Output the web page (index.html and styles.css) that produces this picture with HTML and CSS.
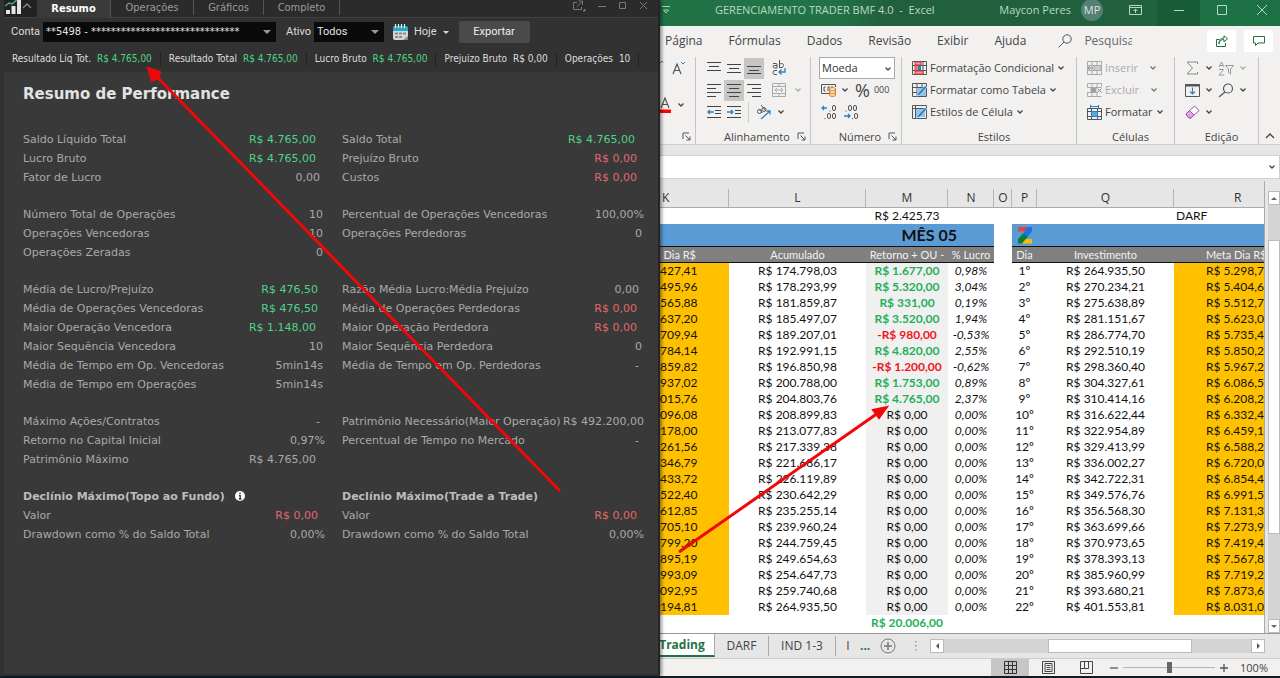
FILE: index.html
```html
<!DOCTYPE html>
<html lang="pt-BR">
<head>
<meta charset="utf-8">
<title>Resumo de Performance</title>
<link rel="stylesheet" href="styles.css">
</head>
<body>
<svg class="defs" width="0" height="0" aria-hidden="true">
  <symbol id="chev" viewBox="0 0 8 8"><path d="M1.500 2.500 4 5l2.500-2.500" fill="none" stroke="currentColor" stroke-width="1.300"/></symbol>
  <symbol id="launch" viewBox="0 0 9 9"><path d="M1 7V1h6M3.500 3.500 8 8M8 4.500V8H4.500" fill="none" stroke="#555"/></symbol>
</svg>
<main class="desk">
  <section class="trader">
    <nav class="tabs">
      <button class="logo" aria-label="Menu"><svg width="30" height="17" viewBox="0 0 30 17"><path d="M2 10h4v4H2zM7.500 6h4v8h-4zM13 0h4v14h-4z" fill="#e4e4e4"/><path d="M1 6l4-3 3 1 6-5" fill="none" stroke="#3fae86" stroke-width="1.500"/><path d="M19 8l4-4 4 4" fill="none" stroke="#888" stroke-width="1.300"/></svg></button>
      <button class="tab on">Resumo</button>
      <button class="tab">Operações</button>
      <button class="tab t2">Gráficos</button>
      <button class="tab t3">Completo</button>
      <span class="wins">
        <button aria-label="Destacar"><svg width="14" height="12" viewBox="0 0 14 12" fill="none" stroke="#777"><path d="M5 2.500H1.500v7h8V7M5 6.500l5-5M6.500 1h4v4"/><path d="M11 11h2V9z" fill="#777"/></svg></button>
        <button aria-label="Minimizar"><svg width="10" height="12" viewBox="0 0 10 12"><path d="M1 6.500h8" stroke="#777"/></svg></button>
        <button aria-label="Maximizar"><svg width="10" height="12" viewBox="0 0 10 12"><path d="M1.500 2.500h6v6h-6z" fill="none" stroke="#777"/></svg></button>
        <button aria-label="Fechar"><svg width="10" height="12" viewBox="0 0 10 12"><path d="M1 2l7 7M8 2L1 9" stroke="#777"/></svg></button>
      </span>
    </nav>
    <div class="filters">
      <label for="conta">Conta</label>
      <span class="pick conta"><select id="conta"><option>**5498 - ******************************</option></select></span>
      <label for="ativo">Ativo</label>
      <span class="pick ativo"><select id="ativo"><option>Todos</option></select></span>
      <button class="today"><svg width="18" height="17" viewBox="0 0 18 17"><rect x="1" y="3" width="15" height="13" rx="2" fill="#d6d6d6"/><path d="M1 7V4q0-2 2-2h11q2 0 2 2v3z" fill="#27a9c9"/><path d="M3.500 0v4M6.500 0v4M9.500 0v4M12.500 0v4" stroke="#e8f6fa" stroke-width="1.200"/><path d="M3 8.500h3v2H3zM7 8.500h3v2H7zM11 8.500h3v2h-3zM3 12h3v2H3zM7 12h3v2H7z" fill="#8b8b8b"/><path d="M11 16l5-4v2q0 2-2 2z" fill="#888"/></svg>Hoje<i class="tri"></i></button>
      <button class="export">Exportar</button>
    </div>
    <div class="totals">
      <span>Resultado Liq Tot. <b class="g">R$ 4.765,00</b></span>
      <span>Resultado Total <b class="g">R$ 4.765,00</b></span>
      <span>Lucro Bruto <b class="g">R$ 4.765,00</b></span>
      <span>Prejuizo Bruto <b>R$ 0,00</b></span>
      <span>Operações <b>10</b></span>
    </div>
    <div class="report">
      <h1>Resumo de Performance</h1>
      <table class="perf">
        <colgroup><col class="c1"><col class="c2"><col class="c3"><col class="c4"></colgroup>
        <tbody>
        <tr><th>Saldo Líquido Total</th><td class="g m">R$ 4.765,00</td><th>Saldo Total</th><td class="g m">R$ 4.765,00</td></tr>
        <tr><th>Lucro Bruto</th><td class="g m">R$ 4.765,00</td><th>Prejuízo Bruto</th><td class="r n">R$ 0,00</td></tr>
        <tr><th>Fator de Lucro</th><td class="d">0,00</td><th>Custos</th><td class="r n">R$ 0,00</td></tr>
        </tbody><tbody>
        <tr><th>Número Total de Operações</th><td>10</td><th>Percentual de Operações Vencedoras</th><td class="z">100,00%</td></tr>
        <tr><th>Operações Vencedoras</th><td>10</td><th>Operações Perdedoras</th><td>0</td></tr>
        <tr><th>Operações Zeradas</th><td>0</td><th></th><td></td></tr>
        </tbody><tbody>
        <tr><th>Média de Lucro/Prejuízo</th><td class="g n">R$ 476,50</td><th>Razão Média Lucro:Média Prejuízo</th><td class="d">0,00</td></tr>
        <tr><th>Média de Operações Vencedoras</th><td class="g n">R$ 476,50</td><th>Média de Operações Perdedoras</th><td class="r n">R$ 0,00</td></tr>
        <tr><th>Maior Operação Vencedora</th><td class="g m">R$ 1.148,00</td><th>Maior Operação Perdedora</th><td class="r n">R$ 0,00</td></tr>
        <tr><th>Maior Sequência Vencedora</th><td>10</td><th>Maior Sequência Perdedora</th><td>0</td></tr>
        <tr><th>Média de Tempo em Op. Vencedoras</th><td>5min14s</td><th>Média de Tempo em Op. Perdedoras</th><td class="d">-</td></tr>
        <tr><th>Média de Tempo em Operações</th><td>5min14s</td><th></th><td></td></tr>
        </tbody><tbody>
        <tr><th>Máximo Ações/Contratos</th><td class="d">-</td><th>Patrimônio Necessário(Maior Operação)</th><td class="z">R$ 492.200,00</td></tr>
        <tr><th>Retorno no Capital Inicial</th><td class="z">0,97%</td><th>Percentual de Tempo no Mercado</th><td class="d">-</td></tr>
        <tr><th>Patrimônio Máximo</th><td class="m">R$ 4.765,00</td><th></th><td></td></tr>
        </tbody><tbody>
        <tr class="sub"><th colspan="2">Declínio Máximo(Topo ao Fundo) <svg class="info" width="10" height="10" viewBox="0 0 10 10"><circle cx="5" cy="5" r="5" fill="#fff"/><path d="M5 1.500v1.500M4 4.500h1.200V8M3.800 8h2.600" fill="none" stroke="#333" stroke-width="1.300"/></svg></th><th colspan="2">Declínio Máximo(Trade a Trade)</th></tr>
        <tr><th>Valor</th><td class="r n">R$ 0,00</td><th>Valor</th><td class="r n">R$ 0,00</td></tr>
        <tr><th>Drawdown como % do Saldo Total</th><td class="z">0,00%</td><th>Drawdown como % do Saldo Total</th><td class="z">0,00%</td></tr>
        </tbody>
      </table>
    </div>
  </section>

  <section class="excel">
    <header class="title">
      <svg class="qat" width="10" height="10" viewBox="0 0 10 10"><path d="M1 1.500h8M2.500 5l2.500 3 2.500-3z" fill="none" stroke="#a9d0b8"/></svg>
      <span class="doc">GERENCIAMENTO TRADER BMF 4.0&nbsp; -&nbsp; Excel</span>
      <span class="user">Maycon Peres</span><span class="avatar">MP</span>
      <button aria-label="Opções da Faixa de Opções"><svg width="13" height="10" viewBox="0 0 13 10" fill="none" stroke="#b7d6c3"><path d="M.5.5h12v9H.5zM.5 2.500h12M6.500 8V4M4.500 6l2-2 2 2"/></svg></button>
      <button class="min" aria-label="Minimizar"><svg width="10" height="10" viewBox="0 0 10 10"><path d="M0 5.500h10" stroke="#b7d6c3"/></svg></button>
      <button aria-label="Maximizar"><svg width="10" height="10" viewBox="0 0 10 10"><path d="M.5.5h9v9h-9z" fill="none" stroke="#b7d6c3"/></svg></button>
      <button class="close" aria-label="Fechar"><svg width="10" height="10" viewBox="0 0 10 10"><path d="M0 0l10 10M10 0L0 10" stroke="#b7d6c3"/></svg></button>
    </header>
    <nav class="menu">
      <a href="#">Página</a><a href="#">Fórmulas</a><a href="#">Dados</a><a href="#">Revisão</a><a href="#">Exibir</a><a href="#">Ajuda</a>
      <label class="find"><svg width="14" height="14" viewBox="0 0 14 14" fill="none" stroke="#555"><circle cx="9" cy="5" r="4.200"/><path d="M6 8l-5.500 5.500"/></svg><input type="text" value="Pesquisa" aria-label="Pesquisar"></label>
      <button class="box" aria-label="Compartilhar"><svg width="12" height="12" viewBox="0 0 12 12" fill="none" stroke="#217346"><path d="M3.500 4.500h-3v7h9V8M3 9c0-3 2-4.500 5-4.500V7l3.500-3.300L8 .8v2.200C5 3 3 5 3 9z"/></svg></button>
      <button class="box" aria-label="Comentários"><svg width="12" height="12" viewBox="0 0 12 12" fill="none" stroke="#217346"><path d="M.5 1.500h11v6.500H5L2.500 10.500V8h-2z"/></svg></button>
    </nav>
    <div class="ribbon">
      <div class="grp fontg">
        <div class="row"><svg width="25" height="18" viewBox="0 0 25 18" fill="none"><path d="M0 4l2-2 1 1.500" stroke="#2b83c4"/><path d="M13 15l4-10 4 10M14.500 11.500h5" stroke="#555" stroke-width="1.200"/><path d="M21 3l2 2 2-2" stroke="#2b83c4"/></svg></div>
        <div class="row low"><svg width="13" height="17" viewBox="0 0 13 17"><path d="M1 11L5 1l4 10M2.500 7.500h5" fill="none" stroke="#555" stroke-width="1.200"/><path d="M0 12.500h11v3.500H0z" fill="#f00"/></svg><svg class="chev"><use href="#chev"/></svg></div>
        <footer><svg class="launch"><use href="#launch"/></svg></footer>
      </div>
      <div class="grp align">
        <div class="row">
          <button aria-label="Alinhar acima"><svg width="14" height="14" viewBox="0 0 14 14" stroke="#444"><path d="M0 1.500h14M2 5.500h10M0 9.500h14"/></svg></button>
          <button aria-label="Alinhar no meio"><svg width="14" height="14" viewBox="0 0 14 14" stroke="#444"><path d="M0 3.500h14M2 7.500h10M0 11.500h14"/></svg></button>
          <button class="down" aria-label="Alinhar abaixo"><svg width="14" height="14" viewBox="0 0 14 14" stroke="#444"><path d="M0 5.500h14M2 9.500h10M0 12.500h14"/></svg></button>
          <button class="wide" aria-label="Quebrar texto"><svg width="14" height="16" viewBox="0 0 14 16" fill="none" stroke="#555"><path d="M1 3.500h3q1 0 1 1V8H2.500Q1 8 1 6.500T2.500 5.500H5M7.500 0v8M7.500 4q4-1.500 4 1.500T7.500 7.500M5 10.500H3q-2 0-2 2t2 2h2"/><path d="M13 8v4H7M9.500 9.500L7 12l2.500 2.500" stroke="#2b83c4" stroke-width="1.300"/></svg></button>
        </div>
        <div class="row">
          <button aria-label="Alinhar à esquerda"><svg width="14" height="14" viewBox="0 0 14 14" stroke="#444"><path d="M0 1.500h14M0 5.500h9M0 9.500h14M0 13.500h9"/></svg></button>
          <button class="down" aria-label="Centralizar"><svg width="14" height="14" viewBox="0 0 14 14" stroke="#444"><path d="M0 1.500h14M2 5.500h10M0 9.500h14M2 13.500h10"/></svg></button>
          <button aria-label="Alinhar à direita"><svg width="14" height="14" viewBox="0 0 14 14" stroke="#444"><path d="M0 1.500h14M5 5.500h9M0 9.500h14M5 13.500h9"/></svg></button>
          <button class="merge" aria-label="Mesclar"><svg width="14" height="14" viewBox="0 0 14 14" fill="none" stroke="#aaa"><path d="M.5.5h13v13H.5zM.5 3.500h13M.5 10.500h13M7 .5v3M7 10.500v3M3 7h8M5 5L3 7l2 2M9 5l2 2-2 2"/></svg></button><svg class="chev dim"><use href="#chev"/></svg>
        </div>
        <div class="row">
          <button aria-label="Diminuir recuo"><svg width="14" height="14" viewBox="0 0 14 14" fill="none" stroke="#444"><path d="M0 1.500h14M8 5.500h6M8 8.500h6M0 12.500h14"/><path d="M7 7H1M3 5L1 7l2 2" stroke="#2b83c4" stroke-width="1.300"/></svg></button>
          <button aria-label="Aumentar recuo"><svg width="14" height="14" viewBox="0 0 14 14" fill="none" stroke="#444"><path d="M0 1.500h14M8 5.500h6M8 8.500h6M0 12.500h14"/><path d="M0 7h6M4 5l2 2-2 2" stroke="#2b83c4" stroke-width="1.300"/></svg></button>
          <button class="orient" aria-label="Orientação"><svg width="16" height="15" viewBox="0 0 16 15" fill="none" stroke="#555"><circle cx="3.500" cy="6.500" r="2"/><path d="M3 4l3.500 4M5 0l4.500 5.500"/><circle cx="8" cy="4.500" r="2"/><path d="M5 14l9-8M10.500 6H14v3.500" stroke="#2b83c4" stroke-width="1.300"/></svg></button><svg class="chev"><use href="#chev"/></svg>
        </div>
        <footer>Alinhamento<svg class="launch"><use href="#launch"/></svg></footer>
      </div>
      <div class="grp num">
        <span class="fmt"><select aria-label="Formato de número"><option>Moeda</option></select><svg class="chev"><use href="#chev"/></svg></span>
        <div class="row">
          <button aria-label="Formato de contabilização"><svg width="16" height="14" viewBox="0 0 16 14" fill="none" stroke="#555"><path d="M8 10.500H.5v-9h14V4M4.500 4H3v4h1.500M7 4v4M7 4h2M10 4h2"/><path d="M8.500 6v6c0 2 6 2 6 0V6c0 2-6 2-6 0s6-2 6 0M8.500 9c0 2 6 2 6 0" fill="#fbd9a8" stroke="#e07b1a"/></svg></button><svg class="chev"><use href="#chev"/></svg>
          <button class="pct">%</button><button class="mil">000</button>
        </div>
        <div class="row dec">
          <button aria-label="Aumentar casas decimais"><svg width="16" height="16" viewBox="0 0 16 16" fill="none" stroke="#555"><path d="M6 4H1M3 2L1 4l2 2" stroke="#2b83c4" stroke-width="1.300"/><rect x="11.500" y="1.500" width="3" height="5" rx="1.500"/><rect x="6.500" y="9.500" width="3" height="5" rx="1.500"/><rect x="11.500" y="9.500" width="3" height="5" rx="1.500"/><path d="M9 6.500v1M4 14v1"/></svg></button>
          <button aria-label="Diminuir casas decimais"><svg width="16" height="16" viewBox="0 0 16 16" fill="none" stroke="#555"><rect x="5.500" y="1.500" width="3" height="5" rx="1.500"/><rect x="10.500" y="1.500" width="3" height="5" rx="1.500"/><rect x="11.500" y="9.500" width="3" height="5" rx="1.500"/><path d="M3 6.500v1M9.500 14v1"/><path d="M1 12h6M5 10l2 2-2 2" stroke="#2b83c4" stroke-width="1.300"/></svg></button>
        </div>
        <footer>Número<svg class="launch"><use href="#launch"/></svg></footer>
      </div>
      <div class="grp styles">
        <button class="cmd"><svg width="15" height="14" viewBox="0 0 15 14" fill="none"><path d="M.5.500h14v13H.5zM.5 4.500h14M.5 9.500h14M4.500.5v13M11 .5v13" stroke="#555"/><path d="M3 1h6v3H3zM3 10h8v3H3zM3 4h2v6H3z" fill="#f1a1a5" stroke="#d13438"/><path d="M6 5h3v4H6z" fill="#2b83c4"/></svg>Formatação Condicional<svg class="chev"><use href="#chev"/></svg></button>
        <button class="cmd"><svg width="15" height="14" viewBox="0 0 15 14" fill="none"><path d="M.5.500h14v13H.5zM.5 4.500h14M.5 9.500h14M5 .5v13M10 .5v13" stroke="#555"/><path d="M5 5h9v8H5z" fill="#8dc3ec"/><path d="M4 13l4-1 7-8-2-1.500L6 10z" fill="#2b83c4" stroke="#f2f1f0" stroke-width=".6"/></svg>Formatar como Tabela<svg class="chev"><use href="#chev"/></svg></button>
        <button class="cmd"><svg width="15" height="14" viewBox="0 0 15 14" fill="none"><path d="M.5.500h14v13H.5z" stroke="#555"/><path d="M.5 3.500h14M3.500.5v13" stroke="#555"/><path d="M4 4h9v8H4z" fill="#8dc3ec"/><path d="M4 13l4-1 7-8-2-1.500L6 10z" fill="#2b83c4" stroke="#f2f1f0" stroke-width=".6"/></svg>Estilos de Célula<svg class="chev"><use href="#chev"/></svg></button>
        <footer>Estilos</footer>
      </div>
      <div class="grp cells">
        <button class="cmd off" disabled><svg width="15" height="14" viewBox="0 0 15 14" fill="none" stroke="#aaa"><path d="M.5.500h14v13H.5zM.5 4.500h14M.5 9.500h14M5 .5v13M10 .5v13"/><path d="M7 4.500h7v5H7z" fill="#ccc"/><path d="M6 7H1M3 5L1 7l2 2" stroke="#888"/></svg><span>Inserir</span><svg class="chev"><use href="#chev"/></svg></button>
        <button class="cmd off" disabled><svg width="15" height="14" viewBox="0 0 15 14" fill="none" stroke="#aaa"><path d="M.5.500h14M.5 4.500h14M.5 9.500h10M.5 13.500h14M5 .5v13M10 .5v4M10 9.500v4M.5.5v4M.5 9.500v4M14.500.5v3"/><path d="M4 5h5v4H4z" fill="#999"/><path d="M10.500 5.500l4 4M14.500 5.500l-4 4" stroke="#888"/></svg><span>Excluir</span><svg class="chev"><use href="#chev"/></svg></button>
        <button class="cmd"><svg width="15" height="15" viewBox="0 0 15 15" fill="none" stroke="#555"><path d="M.5 3.500h14v11H.5zM.5 6.500h14M.5 11.500h14M4.500 3.500v11M10.500 3.500v11"/><path d="M4.500 6.500h6v5h-6z" fill="#5aa5de" stroke="#2b83c4"/><path d="M3.500 0v3M11.500 0v3M3.500 1.500h8" stroke="#2b83c4"/></svg>Formatar<svg class="chev"><use href="#chev"/></svg></button>
        <footer>Células</footer>
      </div>
      <div class="grp edit">
        <div class="row"><button aria-label="Soma"><svg width="15" height="14" viewBox="0 0 15 14"><path d="M12.500 3V1H2l5.500 6L2 13h10.500v-2" fill="none" stroke="#888"/></svg></button><svg class="chev"><use href="#chev"/></svg><button aria-label="Classificar e filtrar"><svg width="16" height="15" viewBox="0 0 16 15" fill="none" stroke="#999"><path d="M1 6l2.500-5L6 6M2 4.500h3M1 8.500h4.500L1 14h5M7.500 4.500h8L12.500 8v5l-2-1.500V8z"/></svg></button><svg class="chev dim"><use href="#chev"/></svg></div>
        <div class="row"><button aria-label="Preencher"><svg width="15" height="14" viewBox="0 0 15 14" fill="none"><path d="M.5 1.500h14v12H.5z" stroke="#555"/><path d="M0 2.500h15" stroke="#555" stroke-width="2"/><path d="M7.500 4.500V11M5 8.500L7.500 11 10 8.500" stroke="#2b83c4" stroke-width="1.200"/></svg></button><svg class="chev"><use href="#chev"/></svg><button aria-label="Localizar"><svg width="16" height="15" viewBox="0 0 16 15" fill="none" stroke="#555" stroke-width="1.200"><circle cx="10" cy="5.500" r="4.500"/><path d="M7 9l-6 5"/></svg></button><svg class="chev"><use href="#chev"/></svg></div>
        <div class="row"><button aria-label="Limpar"><svg width="15" height="14" viewBox="0 0 15 14"><path d="M1 9L9.500 1 14 5.500 6 13H4z" fill="#fff" stroke="#a24bb5"/><path d="M1 9l3.500-3.500L9 10l-3 3H4z" fill="#dba6e6" stroke="#a24bb5"/></svg></button><svg class="chev"><use href="#chev"/></svg></div>
        <footer>Edição</footer>
      </div>
      <button class="fold" aria-label="Recolher"><svg width="10" height="8" viewBox="0 0 10 8"><path d="M1 6l4-4 4 4" fill="none" stroke="#444" stroke-width="1.300"/></svg></button>
    </div>
    <div class="formula"><input type="text" aria-label="Barra de fórmulas"><svg class="chev"><use href="#chev"/></svg></div>
    <div class="work">
      <div class="sheet">
      <table class="grid">
        <colgroup><col class="k"><col class="l"><col class="m"><col class="n"><col class="o"><col class="p"><col class="l"><col class="rr"></colgroup>
        <thead><tr><th class="ck">K</th><th>L</th><th>M</th><th>N</th><th>O</th><th>P</th><th>Q</th><th class="cr">R</th></tr></thead>
        <tbody>
        <tr class="top"><td></td><td></td><td class="free">R$ 2.425,73</td><td></td><td></td><td></td><td></td><td class="darf">DARF</td></tr>
        <tr class="month"><td class="blue mes" colspan="4">MÊS 05</td><td></td><td class="blue z" colspan="3"><svg width="16" height="18" viewBox="0 0 16 18"><path d="M1 1h10v4.500H1z" fill="#ea4335"/><path d="M5 13h10v4.500H4z" fill="#fbbc04"/><path d="M10.500 1H15v4.500L9.500 12 6 8z" fill="#1a73e8"/><path d="M6 7.500l4.500 3.500L5 17.500H1V13z" fill="#0b7d3b"/></svg></td></tr>
        <tr class="names"><td class="gy dk">Dia R$</td><td class="gy">Acumulado</td><td class="gy">Retorno + OU -</td><td class="gy">% Lucro</td><td></td><td class="gy">Dia</td><td class="gy">Investimento</td><td class="gy dr">Meta Dia R$</td></tr>
        <tr><td>427,41</td><td>R$ 174.798,03</td><td class="up">R$ 1.677,00</td><td>0,98%</td><td></td><td>1º</td><td>R$ 264.935,50</td><td>R$ 5.298,71</td></tr>
        <tr><td>495,96</td><td>R$ 178.293,99</td><td class="up">R$ 5.320,00</td><td>3,04%</td><td></td><td>2º</td><td>R$ 270.234,21</td><td>R$ 5.404,68</td></tr>
        <tr><td>565,88</td><td>R$ 181.859,87</td><td class="up">R$ 331,00</td><td>0,19%</td><td></td><td>3º</td><td>R$ 275.638,89</td><td>R$ 5.512,78</td></tr>
        <tr><td>637,20</td><td>R$ 185.497,07</td><td class="up">R$ 3.520,00</td><td>1,94%</td><td></td><td>4º</td><td>R$ 281.151,67</td><td>R$ 5.623,03</td></tr>
        <tr><td>709,94</td><td>R$ 189.207,01</td><td class="dn">-R$ 980,00</td><td>-0,53%</td><td></td><td>5º</td><td>R$ 286.774,70</td><td>R$ 5.735,49</td></tr>
        <tr><td>784,14</td><td>R$ 192.991,15</td><td class="up">R$ 4.820,00</td><td>2,55%</td><td></td><td>6º</td><td>R$ 292.510,19</td><td>R$ 5.850,20</td></tr>
        <tr><td>859,82</td><td>R$ 196.850,98</td><td class="dn">-R$ 1.200,00</td><td>-0,62%</td><td></td><td>7º</td><td>R$ 298.360,40</td><td>R$ 5.967,21</td></tr>
        <tr><td>937,02</td><td>R$ 200.788,00</td><td class="up">R$ 1.753,00</td><td>0,89%</td><td></td><td>8º</td><td>R$ 304.327,61</td><td>R$ 6.086,55</td></tr>
        <tr><td>015,76</td><td>R$ 204.803,76</td><td class="up">R$ 4.765,00</td><td>2,37%</td><td></td><td>9º</td><td>R$ 310.414,16</td><td>R$ 6.208,28</td></tr>
        <tr><td>096,08</td><td>R$ 208.899,83</td><td>R$ 0,00</td><td>0,00%</td><td></td><td>10º</td><td>R$ 316.622,44</td><td>R$ 6.332,45</td></tr>
        <tr><td>178,00</td><td>R$ 213.077,83</td><td>R$ 0,00</td><td>0,00%</td><td></td><td>11º</td><td>R$ 322.954,89</td><td>R$ 6.459,10</td></tr>
        <tr><td>261,56</td><td>R$ 217.339,38</td><td>R$ 0,00</td><td>0,00%</td><td></td><td>12º</td><td>R$ 329.413,99</td><td>R$ 6.588,28</td></tr>
        <tr><td>346,79</td><td>R$ 221.686,17</td><td>R$ 0,00</td><td>0,00%</td><td></td><td>13º</td><td>R$ 336.002,27</td><td>R$ 6.720,05</td></tr>
        <tr><td>433,72</td><td>R$ 226.119,89</td><td>R$ 0,00</td><td>0,00%</td><td></td><td>14º</td><td>R$ 342.722,31</td><td>R$ 6.854,45</td></tr>
        <tr><td>522,40</td><td>R$ 230.642,29</td><td>R$ 0,00</td><td>0,00%</td><td></td><td>15º</td><td>R$ 349.576,76</td><td>R$ 6.991,54</td></tr>
        <tr><td>612,85</td><td>R$ 235.255,14</td><td>R$ 0,00</td><td>0,00%</td><td></td><td>16º</td><td>R$ 356.568,30</td><td>R$ 7.131,37</td></tr>
        <tr><td>705,10</td><td>R$ 239.960,24</td><td>R$ 0,00</td><td>0,00%</td><td></td><td>17º</td><td>R$ 363.699,66</td><td>R$ 7.273,99</td></tr>
        <tr><td>799,20</td><td>R$ 244.759,45</td><td>R$ 0,00</td><td>0,00%</td><td></td><td>18º</td><td>R$ 370.973,65</td><td>R$ 7.419,47</td></tr>
        <tr><td>895,19</td><td>R$ 249.654,63</td><td>R$ 0,00</td><td>0,00%</td><td></td><td>19º</td><td>R$ 378.393,13</td><td>R$ 7.567,86</td></tr>
        <tr><td>993,09</td><td>R$ 254.647,73</td><td>R$ 0,00</td><td>0,00%</td><td></td><td>20º</td><td>R$ 385.960,99</td><td>R$ 7.719,22</td></tr>
        <tr><td>092,95</td><td>R$ 259.740,68</td><td>R$ 0,00</td><td>0,00%</td><td></td><td>21º</td><td>R$ 393.680,21</td><td>R$ 7.873,60</td></tr>
        <tr><td>194,81</td><td>R$ 264.935,50</td><td>R$ 0,00</td><td>0,00%</td><td></td><td>22º</td><td>R$ 401.553,81</td><td>R$ 8.031,08</td></tr>
        <tr class="sum"><td></td><td></td><td class="up">R$ 20.006,00</td><td></td><td></td><td></td><td></td><td></td></tr>
        </tbody>
      </table>
      </div>
      <div class="vbar"><button aria-label="Subir"><i class="tri up3"></i></button><div class="vtrack"><div class="vthumb"></div></div><button aria-label="Descer"><i class="tri"></i></button></div>
    </div>
    <div class="sheets">
      <button class="st on">Trading</button><button class="st">DARF</button><button class="st w2">IND 1-3</button><button class="st w3">I</button><b class="more">...</b>
      <button class="add" aria-label="Nova planilha"><svg width="16" height="16" viewBox="0 0 16 16" fill="none" stroke="#777"><circle cx="8" cy="8" r="7"/><path d="M8 4v8M4 8h8" stroke-width="1.500"/></svg></button>
      <svg class="dots" width="3" height="12" viewBox="0 0 3 12"><path d="M1 1h1.500v1.500H1zM1 5h1.500v1.500H1zM1 9h1.500v1.500H1z" fill="#999"/></svg>
      <div class="hbar"><button aria-label="Esquerda"><i class="tri lf"></i></button><div class="htrack"><div class="hthumb"></div></div><button aria-label="Direita"><i class="tri rt"></i></button></div>
    </div>
    <footer class="status">
      <button class="on" aria-label="Normal"><svg width="13" height="13" viewBox="0 0 13 13" fill="none" stroke="#333"><path d="M.5.500h12v12H.5zM.5 4.500h12M.5 8.500h12M4.500.5v12M8.500.5v12"/></svg></button>
      <button aria-label="Layout da Página"><svg width="13" height="13" viewBox="0 0 13 13" fill="none" stroke="#444"><path d="M.5.500h12v12H.5zM3 2.500h7v8H3zM4.500 4.500h4M4.500 6.500h4M4.500 8.500h4"/></svg></button>
      <button aria-label="Quebra de Página"><svg width="13" height="13" viewBox="0 0 13 13" fill="none" stroke="#444"><path d="M.5.500h12v12H.5zM.5 7.500h8v-7M4.500.5v7"/></svg></button>
      <button class="sm" aria-label="Menos zoom"><svg width="8" height="8" viewBox="0 0 8 8"><path d="M0 4h8" stroke="#555" stroke-width="1.300"/></svg></button>
      <input type="range" aria-label="Zoom" min="0" max="100" value="51">
      <button class="sm" aria-label="Mais zoom"><svg width="8" height="8" viewBox="0 0 8 8"><path d="M0 4h8M4 0v8" stroke="#555" stroke-width="1.300"/></svg></button>
      <span>100%</span>
    </footer>
  </section>
  <svg class="arrows" viewBox="0 0 1280 678" preserveAspectRatio="none" aria-hidden="true"><g stroke="#f00808" stroke-width="3"><path d="M560 491 156 76M679 552 878 413"/></g><path d="M148 68l12 4-1 6-7 3zM887 407l-8 11-6-8z" fill="#f00808" stroke="#f00808" stroke-width="2"/></svg>
</main>
</body>
</html>
```
FILE: styles.css
```css
* { box-sizing: border-box; }
body { margin: 0; background: #0c1c28; }
button { border: 0; background: none; padding: 0; margin: 0; font: inherit; color: inherit; display: flex; align-items: center; justify-content: center; white-space: nowrap; }
svg { display: block; flex: none; }
.defs { position: absolute; }
.desk { position: relative; min-height: 100vh; display: grid; grid-template-columns: 660fr 620fr; padding-bottom: 2px; }
.arrows { position: absolute; inset: 0; z-index: 2; width: 100%; height: 100%; pointer-events: none; }

/* Trading platform window */
.trader { min-width: 0; background: #393939; border-left: 4px solid #323232; border-right: 2px solid #252525; border-bottom: 2px solid #303030; color: #ddd; font: 11px/14px Roboto, sans-serif; box-shadow: 2px 0 3px #0006; z-index: 1; }
.tabs { display: flex; height: 18px; background: #2b2b2b; border-bottom: 1px solid #414141; font: 11px/14px "DejaVu Sans Condensed", "DejaVu Sans", sans-serif; color: #9a9a9a; }
.logo { width: 33px; justify-content: flex-start; background: #222; }
.tab { width: 83px; border-right: 1px solid #555; height: 15px; }
.tab.on { width: 74px; height: 18px; background: #3a3a3a; color: #fff; font-weight: bold; }
.tab.t2 { width: 70px; }
.tab.t3 { width: 76px; }
.wins { display: flex; margin-left: auto; gap: 11px; padding-right: 9px; height: 12px; }
.filters { display: flex; align-items: center; height: 28px; padding-left: 7px; background: #323232; }
.pick { position: relative; margin: 0 10px 0 3px; height: 20px; background: #0a0a0a; }
.pick.conta { width: 233px; }
.pick.ativo { width: 70px; margin: 0 8px 0 3px; }
.pick select { appearance: none; width: 100%; height: 20px; border: 0; padding: 0 14px 0 3px; background: none; color: #e4e4e4; font: inherit; }
.pick.conta select { font-family: "DejaVu Sans Condensed", "DejaVu Sans", sans-serif; }
.pick::after, .tri { content: ""; display: block; width: 0; border: 4px solid transparent; border-top-color: #999; border-bottom: 0; }
.pick::after { position: absolute; right: 5px; top: 8px; }
.today { gap: 4px; }
.tri { border-width: 3px; border-bottom: 0; border-top-color: #ddd; margin-left: 2px; }
.export { width: 71px; height: 22px; margin-left: 10px; background: #4a4a4a; border-radius: 2px; color: #eee; }
.totals { display: flex; height: 26px; align-items: center; background: #323232; font: 10px/14px "DejaVu Sans Condensed", "DejaVu Sans", sans-serif; }
.totals span { padding: 0 8px; border-right: 1px solid #222; white-space: nowrap; }
.totals b { font-weight: normal; margin-left: 3px; }
.g { color: #4fd486; }
.r { color: #e0686c; }
.report { padding: 12px 14px 0 19px; font: 11px/19px "DejaVu Sans", sans-serif; color: #a9a9a9; }
h1 { margin: 0 0 26px; font: bold 15px/20px "DejaVu Sans", sans-serif; color: #e2e2e2; }
.perf { width: 100%; border-collapse: collapse; table-layout: fixed; }
.perf .c1 { width: 212px; }
.perf .c2 { width: 107px; }
.perf .c3 { width: 212px; }
.perf .c4 { width: 90px; }
.perf th { padding: 0; font-weight: normal; text-align: left; white-space: nowrap; height: 19px; }
.perf td { padding: 0 19px 0 0; text-align: right; white-space: nowrap; }
.perf td:last-child { padding-right: 2px; }
.perf td.m { padding-right: 26px; }
.perf td.m:last-child { padding-right: 9px; }
.perf td.n { padding-right: 24px; }
.perf td.n:last-child { padding-right: 7px; }
.perf td.d { padding-right: 22px; }
.perf td.d:last-child { padding-right: 5px; }
.perf td.z { padding-right: 17px; }
.perf td.z:last-child { padding-right: 0; }
.perf td.g { color: #4fd486; }
.perf tbody + tbody::before { content: ""; display: block; height: 18px; }
.perf .sub th { font-weight: bold; color: #bdbdbd; }
.info { display: inline-block; margin-left: 6px; vertical-align: -1px; }

/* Spreadsheet window */
.excel { min-width: 0; display: flex; flex-direction: column; background: #e6e6e6; color: #444; font: 11px/16px "Open Sans", sans-serif; }
.title { display: flex; align-items: center; height: 26px; padding-bottom: 6px; background: linear-gradient(90deg, #217346 28%, #21603d 36%, #21603d 78%, #1e7145 88%); color: #b9d8c5; }
.title .qat { margin-left: 1px; }
.doc { margin-left: 44px; white-space: nowrap; }
.user { margin-left: auto; white-space: nowrap; }
.avatar { width: 22px; height: 22px; margin: 0 11px 0 10px; border-radius: 50%; background: #557f73; text-align: center; line-height: 22px; color: #d6e6de; }
.title button { width: 43px; height: 26px; margin-bottom: -6px; padding-bottom: 6px; }
.title .min { background: #185c37; }
.title .close { width: 37px; }
.menu { display: flex; align-items: center; height: 30px; gap: 26px; padding: 0 7px 0 5px; background: #f2f1f0; font-size: 12px; }
.menu a { color: #444; text-decoration: none; }
.find { display: flex; gap: 12px; align-items: center; margin-left: 6px; }
.find input { width: 48px; border: 0; padding: 0; background: none; font: inherit; color: #666; }
.box { width: 29px; height: 22px; background: #fff; border-radius: 2px; margin-left: auto; }
.box + .box { margin-left: -18px; }
.ribbon { display: flex; height: 89px; padding-top: 1px; background: #f2f1f0; border-bottom: 1px solid #cfcfcf; }
.grp { position: relative; display: flex; flex-direction: column; min-width: 0; height: 87px; border-right: 1px solid #c4c4c4; }
.grp footer { margin-top: auto; height: 15px; line-height: 15px; text-align: center; }
.fontg { flex: 36 1 36px; }
.align { flex: 115 1 115px; padding-left: 8px; }
.num { flex: 91 1 91px; padding-left: 8px; }
.styles { flex: 175 1 175px; padding-left: 10px; }
.cells { flex: 98 1 98px; padding-left: 10px; }
.edit { flex: 84 1 84px; padding-left: 10px; }
.fold { flex: 21 1 21px; align-items: flex-end; padding: 0 0 4px; }
.row { display: flex; align-items: center; height: 22px; }
.row.low { margin-top: 15px; }
.chev { width: 8px; height: 8px; color: #444; }
.dim { color: #aaa; }
.launch { position: absolute; right: 4px; bottom: 3px; width: 9px; height: 9px; }
.low .chev { margin-left: 4px; }
.align button { width: 20px; height: 21px; }
.align .down { background: #c8c6c4; }
.align button.wide, .align button.merge { width: 30px; }
.align .orient { margin-left: 4px; padding-left: 4px; width: 26px; border-left: 1px solid #ccc; }
.orient + .chev { margin-left: 3px; }
.fmt { position: relative; width: 76px; height: 22px; flex: none; }
.fmt select { appearance: none; width: 100%; height: 22px; padding: 0 0 0 2px; border: 1px solid #aaa; border-radius: 0; background: #fff; font: inherit; color: #333; }
.fmt .chev { position: absolute; right: 3px; top: 8px; }
.num .row button { margin: 0 4px 0 2px; }
.num .row .pct { margin: 0 4px 0 6px; font-size: 18px; }
.num .row .mil { margin: 0; font-size: 9px; }
.cmd { height: 22px; align-self: flex-start; gap: 3px; }
.off { color: #aaa; }
.off span { margin-right: 8px; }
.off .chev { color: #777; }
.edit .row { gap: 5px; }
.formula { display: flex; align-items: center; margin: 10px 0 2px; height: 24px; background: #fff; border: 1px solid #d0d0d0; border-left: 0; padding-right: 3px; }
.formula input { flex: 1; border: 0; min-width: 0; background: none; }
.work { display: flex; flex: 1; }
.sheet { flex: 1; min-width: 0; overflow: hidden; background: #fff; border-right: 1px solid #aaa; }
.grid { width: 100%; table-layout: fixed; border-collapse: collapse; font: 12px/16px Lato, sans-serif; color: #111; }
.k { width: 69px; } .l { width: 137px; } .m { width: 82px; } .n { width: 46px; } .o { width: 18px; } .p { width: 25px; } .rr { width: 90px; }
.grid th { height: 26px; padding: 8px 0 0; background: #e6e6e6 linear-gradient(#b5b5b5, #b5b5b5) right bottom / 1px 18px no-repeat; border-bottom: 1px solid #aaa; font: 12px/16px "Open Sans", sans-serif; color: #333; }
.grid th.ck { text-align: left; padding-left: 2px; }
.grid th.cr { text-align: left; padding-left: 60px; background-image: none; }
.grid td { height: 16px; padding: 0; text-align: center; white-space: nowrap; overflow: hidden; }
.grid td:first-child { text-align: right; padding-right: 33px; background: #ffc000; }
.grid td:nth-child(3) { background: #f0f0f0; }
.grid td:nth-child(4) { font-style: italic; }
.grid td:nth-child(8) { text-align: left; padding-left: 32px; background: #ffc000; }
.grid .top td, .grid .sum td, .grid .month td { background: #fff; }
.grid .top td:nth-child(8) { padding-left: 2px; }
.grid .up { color: #1faf59; font-weight: bold; }
.grid .dn { color: #f0141c; font-weight: bold; }
.grid .month td { height: 23px; }
.grid .month td.blue { background: #5b9bd5; border-bottom: 1px solid #111; }
.grid .month td.mes { text-align: right; padding-right: 37px; font-size: 16px; line-height: 22px; font-weight: bold; }
.grid .month td.z { font-style: normal; padding-left: 5px; }
.grid .names td { height: 15px; font-size: 11px; line-height: 15px; font-style: normal; background: #fff; }
.grid .names td.gy { background: #808080; color: #f2f2f2; border-bottom: 1px solid #111; }
.vbar { display: flex; flex-direction: column; width: 12px; margin: 10px 0 0 3px; }
.vbar button, .hbar button { height: 14px; background: #fff; border: 1px solid #bbb; flex: none; }
.vbar .tri, .hbar .tri { margin: 0; border-top-color: #666; }
.vbar .up3 { border: 3px solid transparent; border-top: 0; border-bottom-color: #666; }
.vtrack { flex: 1; padding-top: 35px; background: #d4d4d4; }
.vthumb { height: 84%; max-height: 294px; background: #fff; border: 1px solid #bbb; }
.sheets { display: flex; align-items: center; height: 26px; border-top: 1px solid #999; padding-right: 15px; font-size: 12px; border-bottom: 1px solid #ccc; }
.st { width: 54px; height: 20px; border-right: 1px solid #aaa; }
.st.on { width: 55px; height: 23px; align-self: flex-start; padding-right: 10px; background: #fff; color: #217346; font-weight: bold; border-bottom: 2px solid #217346; }
.st.w2 { width: 67px; }
.st.w3 { width: 24px; border: 0; }
.more { color: #217346; margin-right: 10px; }
.dots { margin: 0 13px 0 18px; }
.hbar { display: flex; flex: 1; }
.hbar button { width: 14px; }
.hbar .htrack { flex: 1; padding-left: 31%; background: #d4d4d4; }
.hthumb { width: 71%; height: 14px; background: #fff; border: 1px solid #bbb; }
.hbar .lf { border: 3px solid transparent; border-left: 0; border-right-color: #555; }
.hbar .rt { border: 3px solid transparent; border-right: 0; border-left-color: #555; }
.status { display: flex; align-items: center; justify-content: flex-end; height: 17px; padding-right: 12px; background: #f2f1f0; }
.status button { width: 38px; height: 17px; }
.status .on { background: #c8c6c4; }
.status .sm { width: 18px; }
.status input { appearance: none; width: 92px; height: 12px; margin: 0; background: linear-gradient(#b5b5b5, #b5b5b5) center / 100% 1px no-repeat; }
.status input::-webkit-slider-thumb { appearance: none; width: 5px; height: 11px; background: #666; }
.status span { margin-left: 7px; }
```
